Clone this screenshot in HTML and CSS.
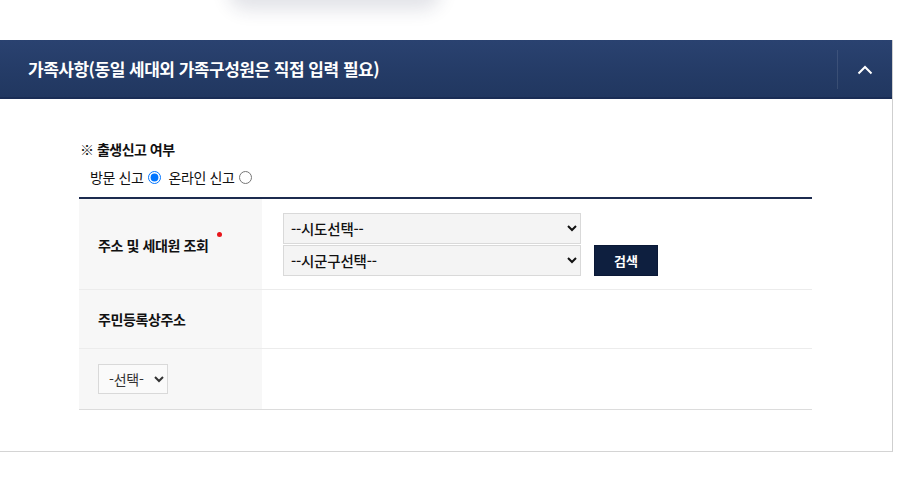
FILE: index.html
```html
<!DOCTYPE html>
<html lang="ko">
<head>
<meta charset="utf-8">
<link rel="stylesheet" href="styles.css">
</head>
<body>
<div class="top"><div class="floating"></div></div>
<section class="panel">
  <header class="panel-head">
    <h2 class="panel-title">가족사항(동일 세대외 가족구성원은 직접 입력 필요)</h2>
    <button class="toggle" type="button" aria-label="접기">
      <svg width="16" height="10" viewBox="0 0 16 10"><path d="M1.5 8.5 L8 2 L14.5 8.5" fill="none" stroke="#fff" stroke-width="2"/></svg>
    </button>
  </header>
  <div class="panel-body">
    <p class="q">※ 출생신고 여부</p>
    <div class="radios">
      <label class="opt">방문 신고 <input type="radio" name="birth" checked></label>
      <label class="opt">온라인 신고 <input type="radio" name="birth"></label>
    </div>
    <table class="form">
      <tr class="r1">
        <th><span class="req">주소 및 세대원 조회</span></th>
        <td>
          <div class="addr">
            <div class="sels">
              <select class="sel"><option>--시도선택--</option></select>
              <select class="sel"><option>--시군구선택--</option></select>
            </div>
            <button class="search" type="button">검색</button>
          </div>
        </td>
      </tr>
      <tr class="r2">
        <th>주민등록상주소</th>
        <td></td>
      </tr>
      <tr class="r3">
        <th><select class="small"><option>-선택-</option></select></th>
        <td></td>
      </tr>
    </table>
  </div>
</section>
</body>
</html>
```
FILE: styles.css
```css
* { box-sizing: border-box; }
body {
  margin: 0;
  background: #fff;
  font-family: "Noto Sans CJK KR", "Noto Sans", sans-serif;
  color: #111;
}
.top { height: 40px; position: relative; overflow: hidden; }
.floating {
  position: absolute;
  left: 232px;
  top: -30px;
  width: 205px;
  height: 30px;
  border-radius: 20px;
  background: #fff;
  box-shadow: 0 6px 18px 4px rgba(30, 40, 80, 0.13);
}
.panel {
  width: 893px;
  border-right: 1px solid #cfcfcf;
  border-bottom: 1px solid #d4d4d4;
}
.panel-head {
  height: 59px;
  display: flex;
  align-items: center;
  justify-content: space-between;
  background: linear-gradient(#2a4270, #243b66 60%, #213760);
  border-bottom: 2px solid #1a2d55;
  padding-left: 28px;
}
.panel-title {
  margin: 0;
  color: #fff;
  font-size: 17px;
  font-weight: 700;
  letter-spacing: -0.5px;
}
.toggle {
  width: 55px;
  height: 39px;
  border: 0;
  border-left: 1px solid rgba(255, 255, 255, 0.1);
  background: transparent;
  display: flex;
  align-items: center;
  justify-content: center;
  padding: 0;
  margin-top: 2px;
}
.panel-body { padding: 40px 80px 41px 79px; }
.q {
  margin: 0 0 0 1px;
  font-size: 14px;
  font-weight: 700;
  line-height: 20px;
  letter-spacing: -0.5px;
}
.radios {
  display: flex;
  gap: 7px;
  padding-left: 11px;
  margin: 8px 0 10px;
  font-size: 14px;
  line-height: 20px;
  letter-spacing: -0.4px;
}
.opt { display: flex; align-items: center; gap: 0; }
.opt input { margin: 0 0 0 5px; width: 13px; height: 13px; }
.form {
  width: 733px;
  border-collapse: collapse;
  border-top: 2px solid #1c2b4f;
}
.form th {
  width: 183px;
  background: #f7f7f7;
  text-align: left;
  padding: 0 0 0 19px;
  font-size: 14px;
  font-weight: 700;
  letter-spacing: -0.4px;
}
.form td { padding: 0 0 0 21px; }
.form tr { border-bottom: 1px solid #ececec; }
.form tr.r3 { border-bottom: 1px solid #dcdcdc; }
.r1 { height: 91px; }
.r1 td { padding-top: 2px; }
.r2 { height: 59px; }
.r3 { height: 61px; }
.req::after {
  content: "";
  display: inline-block;
  width: 5px;
  height: 5px;
  border-radius: 50%;
  background: #e8151b;
  margin-left: 9px;
  vertical-align: 14px;
}
.addr { display: flex; align-items: flex-end; gap: 13px; }
.sels { display: flex; flex-direction: column; gap: 1px; }
.sel, .small {
  font-family: inherit;
  font-size: 14.5px;
  font-weight: 500;
  color: #111;
  background: #f4f4f4;
  border: 1px solid #d9d9d9;
  border-radius: 0;
  height: 31px;
  padding: 0 3px;
  letter-spacing: -0.2px;
}
.sel { width: 298px; }
.small { width: 70px; height: 30px; background: #fafafa; color: #333; font-weight: 400; font-size: 14px; padding: 0 6px; }
.search {
  width: 64px;
  height: 31px;
  background: #0e1f3f;
  border: 1px solid #0a1836;
  color: #fff;
  font-family: inherit;
  font-weight: 700;
  font-size: 13px;
  padding: 0;
}
```
